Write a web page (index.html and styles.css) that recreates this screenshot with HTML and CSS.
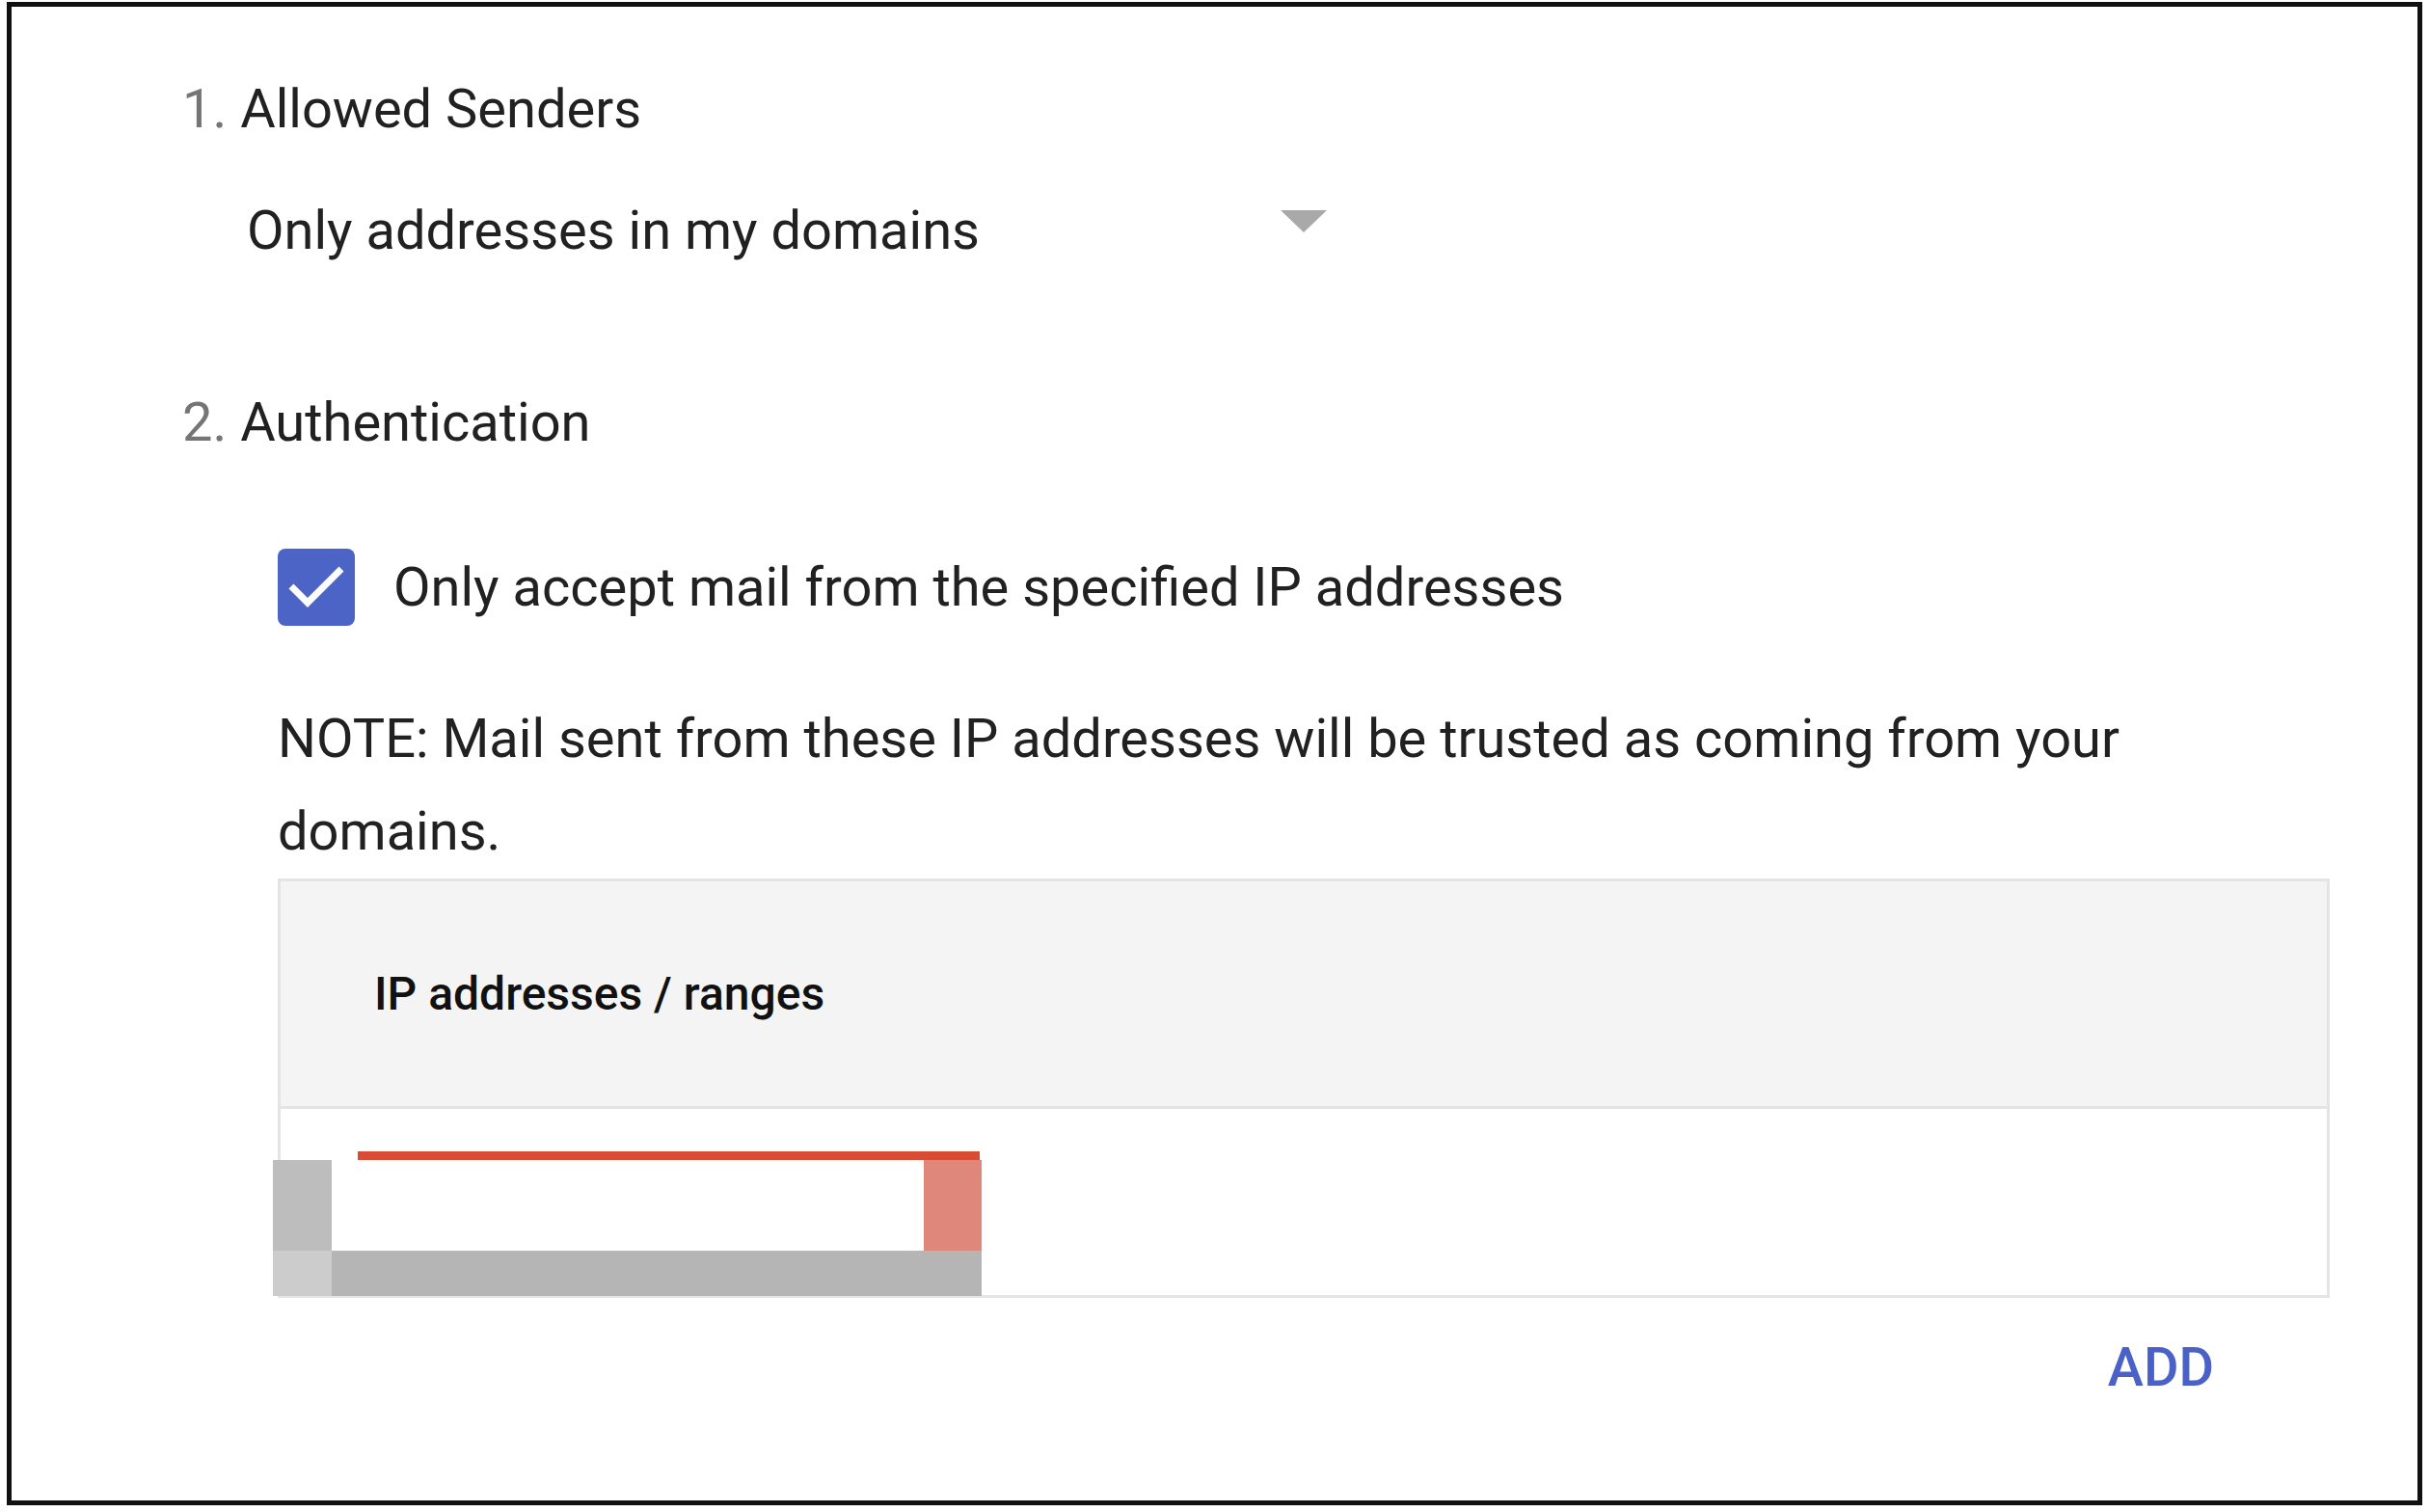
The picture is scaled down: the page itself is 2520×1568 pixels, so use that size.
FILE: index.html
```html
<!DOCTYPE html>
<html lang="en">
<head>
<meta charset="utf-8">
<title>Allowed Senders</title>
<link rel="stylesheet" href="styles.css">
</head>
<body>
<div class="frame">
  <div class="content">
    <section class="setting">
      <h2 class="setting-title"><span class="num">1.</span> Allowed Senders</h2>
      <div class="select">
        <span class="select-value">Only addresses in my domains</span>
        <svg class="select-arrow" width="48" height="23" viewBox="0 0 48 23"><polygon points="0,0 48,0 24,23" fill="#a9a9a9"/></svg>
      </div>
    </section>
    <section class="setting setting-auth">
      <h2 class="setting-title"><span class="num">2.</span> Authentication</h2>
      <div class="indent">
        <div class="checkbox-row">
          <span class="checkbox">
            <svg width="80" height="80" viewBox="0 0 80 80"><polyline points="14,39 31,56 66,21" fill="none" stroke="#ffffff" stroke-width="7"/></svg>
          </span>
          <span class="checkbox-label">Only accept mail from the specified IP addresses</span>
        </div>
        <p class="note">NOTE: Mail sent from these IP addresses will be trusted as coming from your domains.</p>
        <div class="ip-table">
          <div class="ip-head">IP addresses / ranges</div>
          <div class="ip-body">
            <div class="redact">
              <div class="redact-line"></div>
              <div class="r-gray"></div>
              <div class="r-blank"></div>
              <div class="r-pink"></div>
              <div class="r-light"></div>
              <div class="r-dark"></div>
            </div>
          </div>
        </div>
        <div class="actions"><button class="add-btn" type="button">ADD</button></div>
      </div>
    </section>
  </div>
</div>
</body>
</html>
```

FILE: styles.css
```css
html, body {
  margin: 0;
  padding: 0;
  background: #ffffff;
}

body {
  font-family: Roboto, "Liberation Sans", Arial, sans-serif;
  color: #212121;
}

.frame {
  margin: 2px 8px 7px 7px;
  border: 5px solid #111111;
  height: 1559px;
  box-sizing: border-box;
  overflow: hidden;
}

.content {
  padding: 58px 0 0 177px;
}

.setting-title {
  margin: 0;
  font-size: 56px;
  font-weight: 400;
  line-height: 96px;
  color: #212121;
}

.num {
  color: #757575;
}

.select {
  margin-top: 30px;
  margin-left: 67px;
  width: 1120px;
  display: flex;
  justify-content: space-between;
  font-size: 56px;
  line-height: 96px;
  color: #212121;
}

.select-arrow {
  align-self: flex-start;
  margin-top: 27px;
}

.setting-auth {
  margin-top: 103px;
}

.indent {
  padding-left: 99px;
  width: 2128px;
}

.checkbox-row {
  margin-top: 75px;
  display: flex;
  align-items: center;
  gap: 40px;
  font-size: 56px;
  line-height: 96px;
}

.checkbox {
  width: 80px;
  height: 80px;
  border-radius: 8px;
  background: #4b64c6;
  display: flex;
}

.note {
  margin: 61px 0 0 0;
  font-size: 56px;
  line-height: 96px;
  color: #212121;
}

.ip-table {
  margin-top: 1px;
  border: 3px solid #e4e4e4;
}

.ip-head {
  height: 233px;
  background: #f4f4f4;
  border-bottom: 3px solid #e4e4e4;
  display: flex;
  align-items: center;
  padding-left: 97px;
  font-size: 48px;
  font-weight: 500;
  color: #111111;
}

.ip-body {
  height: 193px;
  position: relative;
}

.redact {
  position: absolute;
  left: -8px;
  top: 44px;
  display: grid;
  grid-template-columns: 61px 614px 60px;
  grid-template-rows: 9px 94px 47px;
}

.redact-line {
  grid-column: 1 / -1;
  margin-left: 88px;
  width: 645px;
  background: #d84b34;
}

.r-gray { background: #bdbdbd; }
.r-pink { background: #e0877c; }
.r-light { background: #cccccc; }
.r-dark {
  grid-column: 2 / 4;
  background: #b5b5b5;
}

.actions {
  margin-top: 24px;
  display: flex;
  justify-content: flex-end;
  padding-right: 120px;
}

.add-btn {
  background: none;
  border: 0;
  padding: 0;
  font-family: Roboto, "Liberation Sans", Arial, sans-serif;
  font-size: 56px;
  font-weight: 500;
  line-height: 96px;
  color: #4a62c7;
  cursor: pointer;
}
```
